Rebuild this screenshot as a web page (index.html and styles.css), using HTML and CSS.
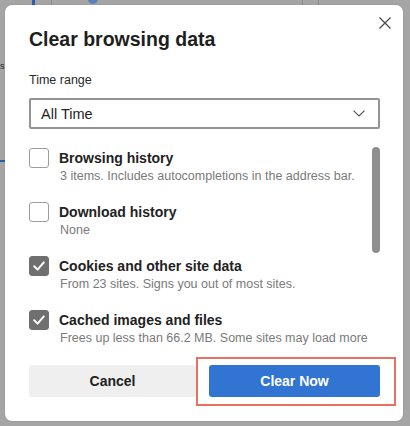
FILE: index.html
```html
<!DOCTYPE html>
<html lang="en">
<head>
<meta charset="utf-8">
<title>Clear browsing data</title>
<link rel="stylesheet" href="styles.css">
</head>
<body>
  <div class="backdrop" aria-hidden="true">
    <span class="bg-bar bg-bar-blue"></span>
    <span class="bg-bar bg-bar-gray1"></span>
    <span class="bg-dot"></span>
    <span class="bg-bar bg-bar-gray2"></span>
    <span class="bg-bar bg-bar-gray3"></span>
    <span class="bg-letter">s</span>
    <span class="bg-dash"></span>
  </div>

  <div class="dialog">
    <button class="close" aria-label="Close">
      <svg width="12" height="12" viewBox="0 0 12 12"><path d="M0.5 0.5 L11.5 11.5 M11.5 0.5 L0.5 11.5" stroke="#4a4a4a" stroke-width="1.3" fill="none"/></svg>
    </button>

    <h1 class="title">Clear browsing data</h1>

    <div class="field-label">Time range</div>
    <div class="select">
      <span class="select-value">All Time</span>
      <svg class="chevron" width="12" height="7" viewBox="0 0 12 7"><path d="M0.5 0.6 L6 6 L11.5 0.6" stroke="#555" stroke-width="1.2" fill="none"/></svg>
    </div>

    <div class="list-wrap">
      <div class="list">
        <div class="row">
          <span class="box"></span>
          <div class="text">
            <div class="label">Browsing history</div>
            <div class="sub">3 items. Includes autocompletions in the address bar.</div>
          </div>
        </div>
        <div class="row">
          <span class="box"></span>
          <div class="text">
            <div class="label">Download history</div>
            <div class="sub">None</div>
          </div>
        </div>
        <div class="row">
          <span class="box checked"><svg width="20" height="20" viewBox="0 0 20 20"><path d="M5.2 10.3 L8.6 13.6 L14.8 6.4" stroke="#fff" stroke-width="2" fill="none" stroke-linecap="round" stroke-linejoin="round"/></svg></span>
          <div class="text">
            <div class="label">Cookies and other site data</div>
            <div class="sub">From 23 sites. Signs you out of most sites.</div>
          </div>
        </div>
        <div class="row">
          <span class="box checked"><svg width="20" height="20" viewBox="0 0 20 20"><path d="M5.2 10.3 L8.6 13.6 L14.8 6.4" stroke="#fff" stroke-width="2" fill="none" stroke-linecap="round" stroke-linejoin="round"/></svg></span>
          <div class="text">
            <div class="label">Cached images and files</div>
            <div class="sub">Frees up less than 66.2 MB. Some sites may load more</div>
          </div>
        </div>
      </div>
      <div class="scrollbar"><div class="thumb"></div></div>
    </div>

    <div class="actions">
      <button class="btn cancel">Cancel</button>
      <div class="primary-wrap">
        <button class="btn primary">Clear Now</button>
        <span class="highlight" aria-hidden="true"></span>
      </div>
    </div>
  </div>
</body>
</html>
```

FILE: styles.css
```css
* { box-sizing: border-box; }

html, body {
  margin: 0;
  height: 426px;
  overflow: hidden;
}

body {
  background: #a5a5a5;
  padding: 5px 7px 5px 5px;
  font-family: "Liberation Sans", Arial, sans-serif;
  position: relative;
}

/* faint background page behind the modal */
.backdrop .bg-bar {
  position: absolute;
  top: 0;
  height: 5px;
  width: 1px;
  background: #8c8c8c;
}
.backdrop .bg-bar-blue { left: 32px; width: 3px; background: #2c5ea8; }
.backdrop .bg-bar-gray1 { left: 51px; }
.backdrop .bg-bar-gray2 { left: 302px; }
.backdrop .bg-bar-gray3 { left: 318px; }
.backdrop .bg-dot {
  position: absolute;
  left: 88px;
  top: -6px;
  width: 10px;
  height: 10px;
  border-radius: 50%;
  background: #5a80bf;
}
.backdrop .bg-letter {
  position: absolute;
  left: 0;
  top: 60px;
  font-size: 9px;
  line-height: 12px;
  color: #2a2a2a;
}
.backdrop .bg-dash {
  position: absolute;
  left: 0;
  top: 160px;
  width: 5px;
  height: 2px;
  background: #2c5ea8;
}

.dialog {
  position: relative;
  width: 398px;
  height: 416px;
  background: #fff;
  border-radius: 7px;
  padding: 22px 23px 24px 24px;
  display: flex;
  flex-direction: column;
  box-shadow: 0 0 2px rgba(0,0,0,0.15);
}

.close {
  position: absolute;
  top: 12px;
  left: 374px;
  width: 12px;
  height: 12px;
  padding: 0;
  border: 0;
  background: none;
  display: flex;
}

.title {
  margin: 0;
  font-size: 19.5px;
  line-height: 24px;
  font-weight: bold;
  color: #1e1e1e;
}

.field-label {
  margin-top: 22px;
  font-size: 12.5px;
  line-height: 15px;
  color: #2a2a2a;
}

.select {
  margin-top: 10px;
  height: 31px;
  border: 2px solid #939393;
  border-radius: 2px;
  display: flex;
  align-items: center;
  justify-content: space-between;
  padding: 0 13px 0 10px;
}
.select-value {
  font-size: 14.5px;
  color: #1e1e1e;
  line-height: 18px;
}
.chevron { display: block; }

.list-wrap {
  margin-top: 19px;
  display: flex;
}
.list {
  flex: 1;
  min-width: 0;
  display: flex;
  flex-direction: column;
  gap: 18px;
  overflow: hidden;
}
.row {
  display: grid;
  grid-template-columns: 20px 1fr;
  column-gap: 10px;
  align-items: start;
}
.box {
  width: 20px;
  height: 20px;
  border: 1px solid #9c9c9c;
  border-radius: 3px;
  background: #fff;
  position: relative;
}
.box.checked {
  background: #6f6f6f;
  border-color: #6f6f6f;
}
.box.checked svg {
  position: absolute;
  left: -1px;
  top: -1px;
}
.text {
  padding-top: 2px;
  min-width: 0;
  white-space: nowrap;
}
.label {
  font-size: 14px;
  line-height: 17px;
  font-weight: bold;
  color: #222;
}
.sub {
  margin-top: 1px;
  font-size: 12.5px;
  line-height: 16px;
  color: #7a7a7a;
  padding-left: 1px;
}

.scrollbar {
  width: 8px;
  margin-left: 1px;
  margin-top: -1px;
}
.thumb {
  width: 8px;
  height: 106px;
  border-radius: 4px;
  background: #8f8f8f;
}

.actions {
  margin-top: auto;
  display: grid;
  grid-template-columns: 167px 171px;
  column-gap: 13px;
}
.btn {
  height: 32px;
  border: 0;
  border-radius: 3px;
  font-family: "Liberation Sans", Arial, sans-serif;
  font-size: 14px;
  font-weight: bold;
  padding: 0;
}
.cancel {
  background: #efefef;
  color: #222;
}
.primary-wrap {
  position: relative;
  display: flex;
}
.primary {
  flex: 1;
  background: #3174d2;
  color: #fff;
}
.highlight {
  position: absolute;
  top: -8px;
  left: -13px;
  right: -16px;
  bottom: -9px;
  border: 2px solid #ea7160;
  pointer-events: none;
}
```
